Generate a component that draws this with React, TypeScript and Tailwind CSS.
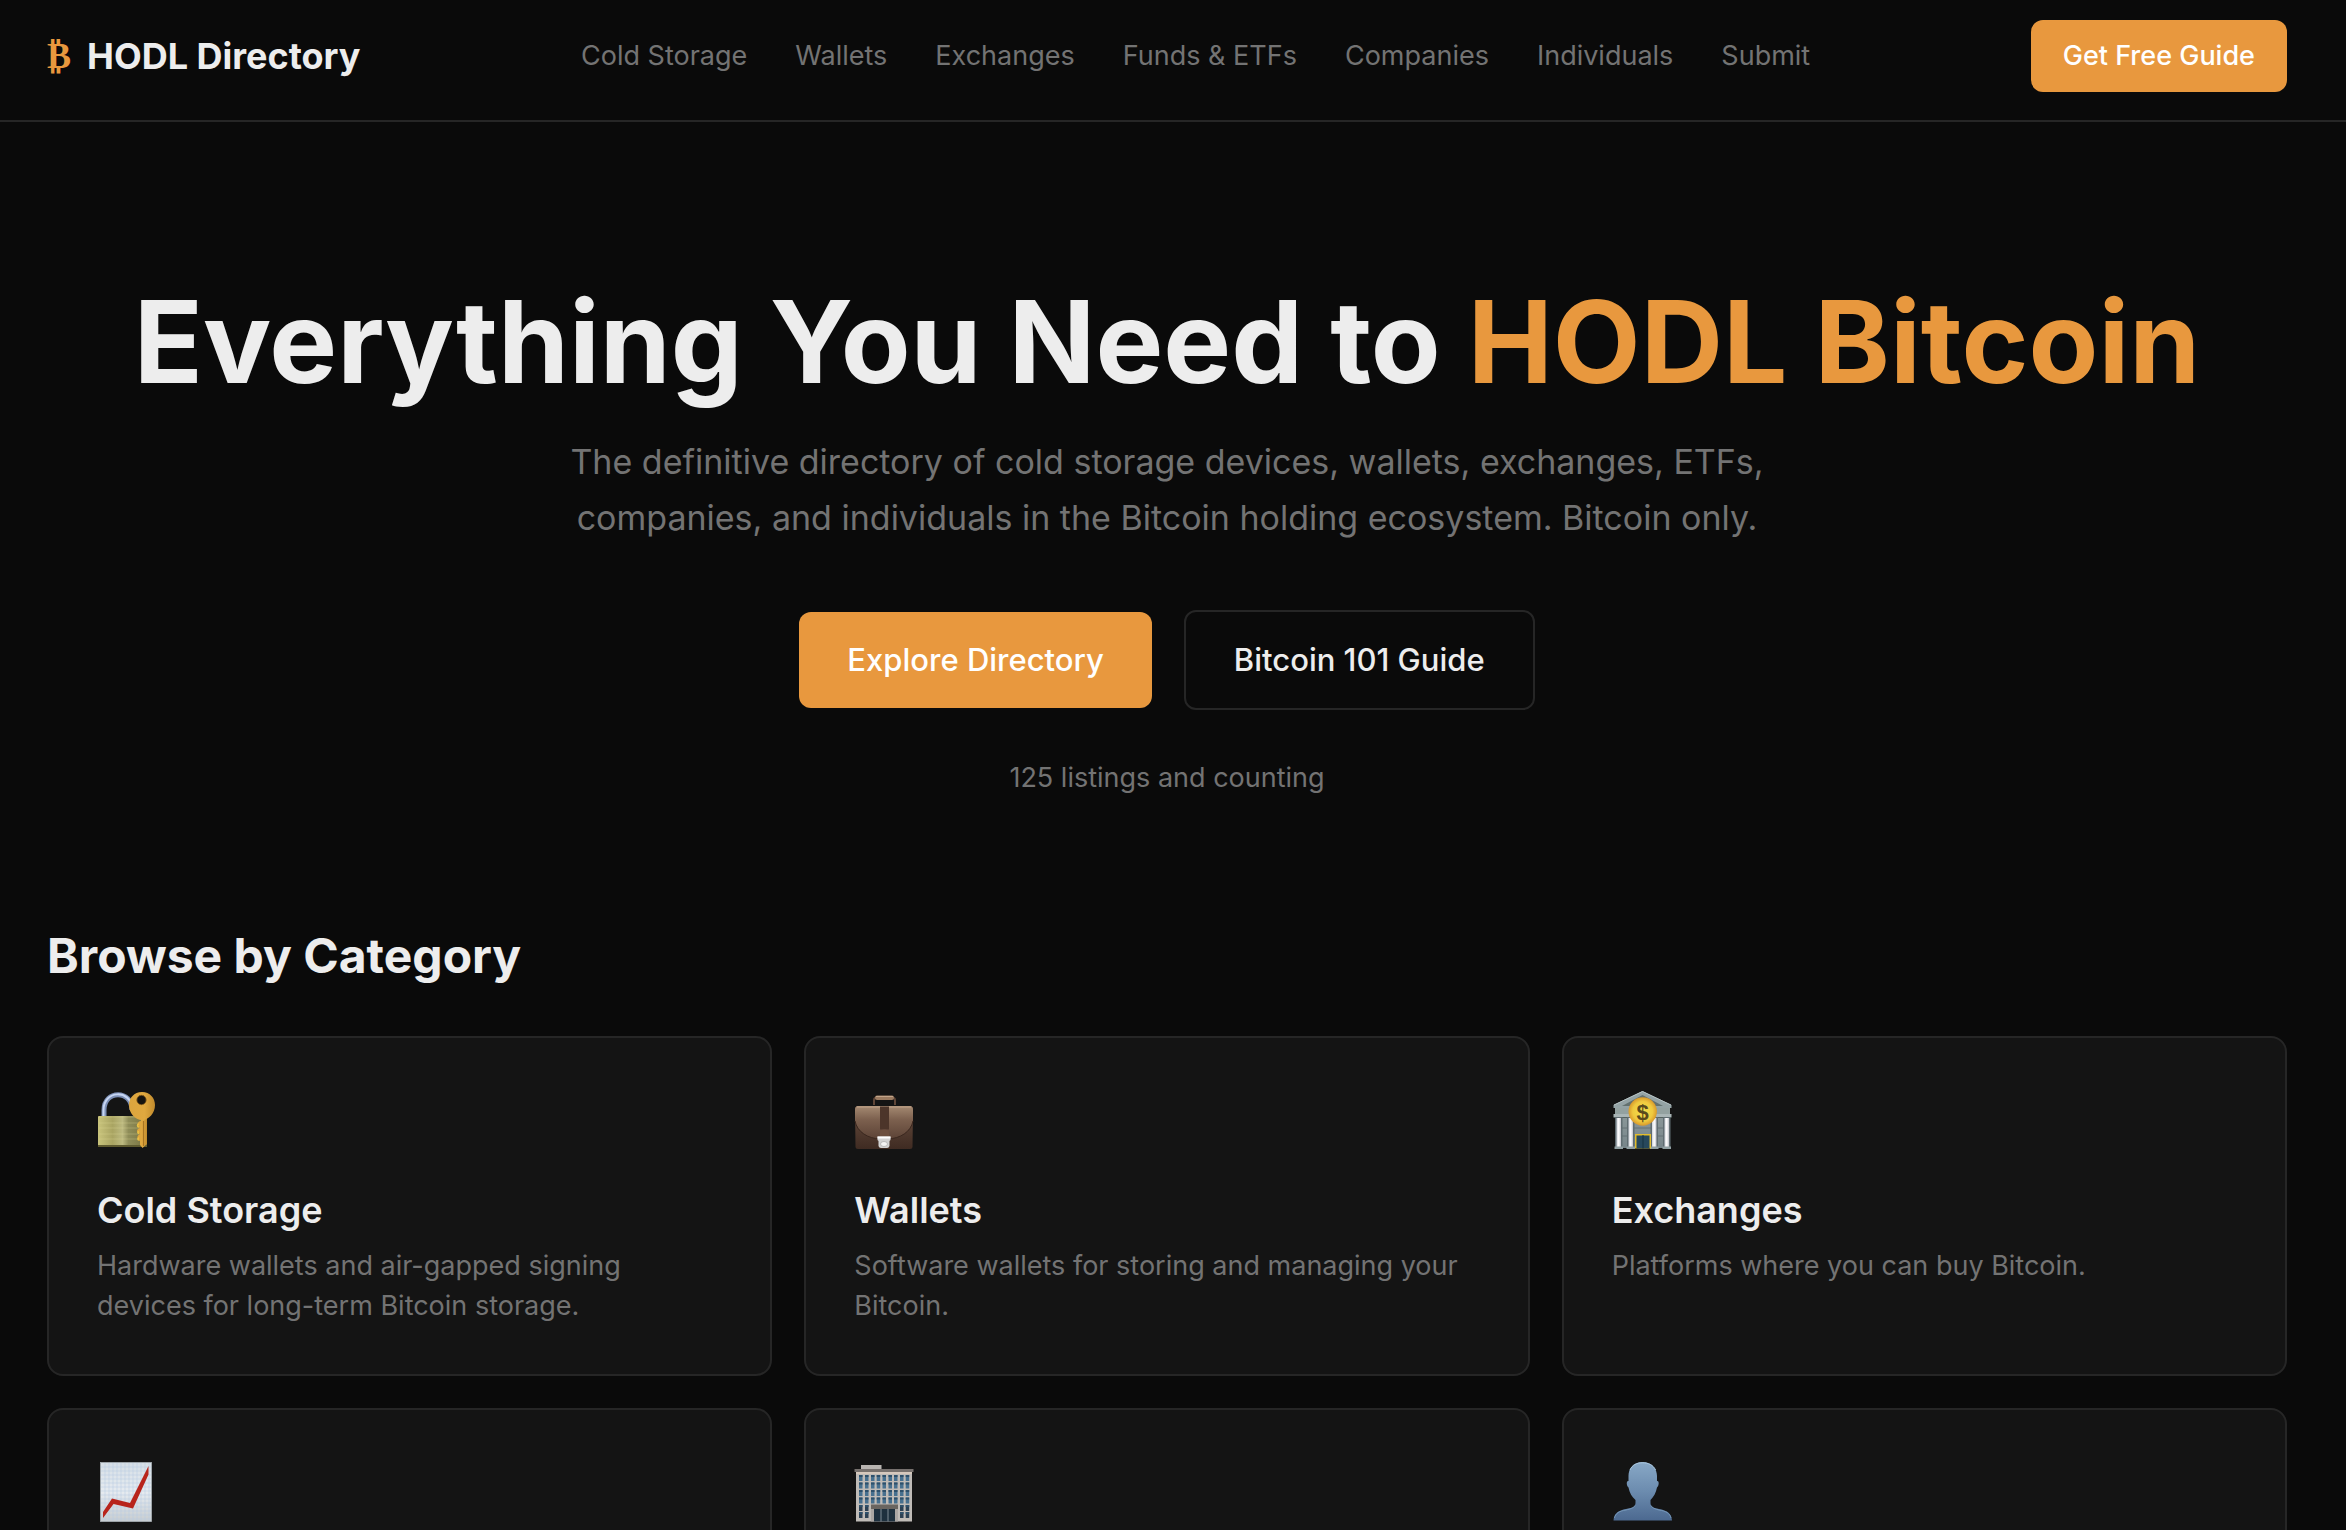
import React from 'react';

interface ICategory {
  title: string;
  description: string;
  href: string;
  Icon: React.FC;
}

const LockIcon: React.FC = () => (
  <svg viewBox="0 0 60 60" className="size-[60px]" aria-hidden="true">
    <defs>
      <linearGradient id="lockBody" x1="0" x2="1">
        <stop offset="0" stopColor="#c9c47c" />
        <stop offset="0.3" stopColor="#a9a462" />
        <stop offset="0.5" stopColor="#bcb980" />
        <stop offset="0.62" stopColor="#8f8d59" />
        <stop offset="1" stopColor="#76713f" />
      </linearGradient>
      <linearGradient id="lockKey" x1="0" x2="1">
        <stop offset="0" stopColor="#dca53e" />
        <stop offset="0.6" stopColor="#e0a83f" />
        <stop offset="1" stopColor="#c08a2c" />
      </linearGradient>
    </defs>
    <path d="M7 27V20C7 -0.5 35 -0.5 35 20" fill="none" stroke="#7c8fb5" strokeWidth="5" />
    <path d="M6.5 27V20C6.5 -0.5 34 -0.5 35 18" fill="none" stroke="#c6d5f2" strokeWidth="2" />
    <rect x="1" y="26" width="49" height="31" rx="1" fill="url(#lockBody)" />
    <path d="M1.5 27H43M2 33H42M2 38H42M2 44H42M2 49H42" stroke="#e3dd9c" strokeWidth="0.6" opacity="0.5" />
    <path d="M1 56H50" stroke="#5f5b30" strokeWidth="2" />
    <path d="M44 31C40 31 39 37 43 38C39 39 39 43 43 44C39 46 40 50 43 51V55L45.5 58L50 54V28H43Z" fill="url(#lockKey)" />
    <path d="M46.500 31V56" stroke="#a87522" strokeWidth="1.200" />
    <path d="M42 34C40 34 40 37 42 37M42 41.500C40.500 41.500 40.500 43.500 42 43.500M42 48C40.500 48 40.500 50 42 50" fill="none" stroke="#e8c145" strokeWidth="1.500" />
    <path fillRule="evenodd" d="M45 2C53 2 58 8 58 15C58 23 52 30 45 30C38 30 32 23 32 15C32 8 37 2 45 2ZM44.500 5.300A4.700 4.700 0 1 0 44.500 14.700A4.700 4.700 0 1 0 44.500 5.300Z" fill="url(#lockKey)" />
    <circle cx="44.500" cy="10" r="4.700" fill="#15130f" stroke="#98691f" strokeWidth="0.800" />
  </svg>
);

const BriefcaseIcon: React.FC = () => (
  <svg viewBox="0 0 60 60" className="size-[60px]" aria-hidden="true">
    <defs>
      <linearGradient id="caseBack" x1="0" y1="0" x2="0" y2="1">
        <stop offset="0" stopColor="#6b5041" />
        <stop offset="1" stopColor="#3f2b22" />
      </linearGradient>
      <linearGradient id="caseFlap" x1="0" y1="0" x2="0" y2="1">
        <stop offset="0" stopColor="#a58a72" />
        <stop offset="0.4" stopColor="#7d614f" />
        <stop offset="1" stopColor="#5c4336" />
      </linearGradient>
    </defs>
    <path d="M20 15V10Q20 7.500 23 7.500H38Q41 7.500 41 10V15" fill="none" stroke="#5f4638" strokeWidth="2" />
    <rect x="21" y="5.500" width="19" height="4.500" rx="2" fill="#9a7a60" />
    <path d="M22 6.500H39" stroke="#c3a58a" strokeWidth="1" />
    <path d="M1 20Q1 16 4 16H56Q59 16 59 20L58.500 57Q58.500 59 56 59H4Q1.500 59 1.500 57Z" fill="url(#caseBack)" />
    <path d="M1 20Q1 16 4 16H56Q59 16 59 20V30C57 42 46 48.500 34 49H26C14 48.500 3 42 1 30Z" fill="url(#caseFlap)" />
    <path d="M1 31C3 42 14 48.500 26 49H34C46 48.500 57 42 59 31" fill="none" stroke="#3a271e" strokeWidth="1" />
    <path d="M3 17H57" stroke="#c2a48a" strokeWidth="1" />
    <rect x="26" y="16.500" width="9" height="23" fill="#4c352a" />
    <path d="M26 43Q26 39.500 30.500 39.500Q35 39.500 35 43V47H26Z" fill="#6d5040" />
    <path d="M23.500 46.500H36.500V50L35.500 51V56Q35 58 33 58H27Q25 58 24.500 56V51L23.500 50Z" fill="#d3d3d3" />
    <path d="M23.500 47.500H36.500" stroke="#ffffff" strokeWidth="2" />
    <ellipse cx="30" cy="54" rx="3.500" ry="2.500" fill="#f4f4f4" stroke="#a8a8a8" strokeWidth="0.700" />
  </svg>
);

const BankIcon: React.FC = () => (
  <svg viewBox="0 0 60 60" className="size-[60px]" aria-hidden="true">
    <defs>
      <linearGradient id="bankWall" x1="0" y1="0" x2="0" y2="1">
        <stop offset="0" stopColor="#8a9799" />
        <stop offset="1" stopColor="#77858a" />
      </linearGradient>
      <radialGradient id="bankCoin">
        <stop offset="0" stopColor="#f3e14c" />
        <stop offset="0.7" stopColor="#efc93f" />
        <stop offset="1" stopColor="#d99a2b" />
      </radialGradient>
      <linearGradient id="bankColumn" x1="0" x2="1">
        <stop offset="0" stopColor="#cfd2da" />
        <stop offset="0.5" stopColor="#ffffff" />
        <stop offset="1" stopColor="#c0c2ca" />
      </linearGradient>
    </defs>
    <rect x="3" y="25" width="55" height="33" fill="url(#bankWall)" />
    <path d="M3 38H58M3 46H58" stroke="#5e6b70" strokeWidth="0.800" />
    <path d="M30.500 1L59.500 15V18H1.500V15Z" fill="#94a3a5" />
    <path d="M30.500 5L51 16H10Z" fill="#63716f" />
    <path d="M2 15L30.500 1.500L59 15" fill="none" stroke="#b7c4c5" strokeWidth="1" />
    <rect x="3" y="18" width="55" height="6" fill="#93a1a0" />
    <rect x="1.500" y="24" width="58" height="3" fill="#a9b5b6" />
    <path d="M1.500 27.500H59.500" stroke="#56625f" strokeWidth="1" />
    {[4.5, 16.5, 40, 52.5].map((x) => (
      <g key={x}>
        <rect x={x - 1.5} y="27" width="7.500" height="31" fill="#5f6c71" />
        <rect x={x} y="28" width="4.500" height="29" fill="url(#bankColumn)" />
        <rect x={x - 2} y="56.500" width="8.500" height="2.500" fill="#91a0a3" />
      </g>
    ))}
    <rect x="23" y="44" width="16" height="14.500" fill="#e3bd2b" />
    <rect x="24.500" y="45.500" width="13" height="13" fill="#27485c" />
    <path d="M31 45V58.500" stroke="#16303f" strokeWidth="1" />
    <circle cx="30.700" cy="21.500" r="14.200" fill="url(#bankCoin)" />
    <text x="30.700" y="29.500" textAnchor="middle" className="fill-[#59491c] font-['Liberation_Sans'] text-[22px] font-bold">$</text>
  </svg>
);

const ChartIcon: React.FC = () => (
  <svg viewBox="0 0 60 60" className="size-[60px]" aria-hidden="true">
    <defs>
      <linearGradient id="chartPaper" x1="0" y1="0" x2="0" y2="1">
        <stop offset="0" stopColor="#d6dfe6" />
        <stop offset="0.5" stopColor="#e6ebf0" />
        <stop offset="1" stopColor="#c8cdd0" />
      </linearGradient>
    </defs>
    <rect x="3.500" y="0.500" width="51" height="59" fill="url(#chartPaper)" stroke="#a9b0b5" strokeWidth="0.800" />
    <path d="M8 1V59M12 1V59M16 1V59M20 1V59M24 1V59M28 1V59M32 1V59M36 1V59M40 1V59M44 1V59M48 1V59M52 1V59M4 5H54M4 9H54M4 13H54M4 17H54M4 21H54M4 25H54M4 29H54M4 33H54M4 37H54M4 41H54M4 45H54M4 49H54M4 53H54M4 57H54" stroke="#b4cbe0" strokeWidth="0.500" />
    <path d="M6 56V50L15 36.500L33 41L51.500 4V12.500L36 46.500L16.500 42Z" fill="#b8241b" />
  </svg>
);

const BuildingIcon: React.FC = () => (
  <svg viewBox="0 0 60 60" className="size-[60px]" aria-hidden="true">
    <rect x="7" y="3" width="20.500" height="5" fill="#b9b5b1" />
    <rect x="2" y="10" width="56" height="49.500" fill="#bfbbb7" />
    <path d="M2 11H58" stroke="#d5c8bd" strokeWidth="2" />
    <rect x="0.500" y="7" width="59" height="3" fill="#77716e" />
    {[13, 20.5, 28, 35.5, 43, 50].map((y, row) => (
      <g key={y}>
        {[5, 11, 17, 22.7, 28.5, 34.5, 40, 46, 51.7].map((x) => (
          <g key={x}>
            <rect x={x} y={y} width="3.500" height="6" fill={row > 3 ? '#2c4154' : '#47708f'} />
            <rect x={x} y={y} width="3.500" height="2" fill="#2e506b" />
          </g>
        ))}
      </g>
    ))}
    <rect x="17" y="43" width="27" height="16.500" fill="#aaa6a3" />
    <rect x="20" y="47" width="21" height="12.500" fill="#1e303e" />
    <path d="M27 47V59.500M34 47V59.500" stroke="#7e8b94" strokeWidth="1" />
    <rect x="17" y="42.500" width="27" height="4.500" fill="#6a6560" />
  </svg>
);

const PersonIcon: React.FC = () => (
  <svg viewBox="0 0 60 60" className="size-[60px]" aria-hidden="true">
    <defs>
      <linearGradient id="personFill" x1="0" y1="0" x2="0" y2="1">
        <stop offset="0" stopColor="#88a8c6" />
        <stop offset="0.5" stopColor="#6c8caf" />
        <stop offset="1" stopColor="#4c6990" />
      </linearGradient>
    </defs>
    <path
      d="M30.500 0C40 0 45 7 45 14V19C47.500 18.500 47 24 45 25.500C44 31 41.500 35 38.500 38V41C38.500 45 42 46 47 47C55 48.500 59.500 51 60 58.500H1.500C2 51 6.500 48.500 14 47C19.500 46 23.500 45 23.500 41V38C20 35 17.500 31 16.500 25.500C14.500 24 14 18.500 16.500 19V14C16.500 7 21 0 30.500 0Z"
      fill="url(#personFill)"
    />
    <path d="M18 8C20 3 25 0.800 30.500 0.800C36 0.800 41.500 3 43.500 8" fill="none" stroke="#a9c6dd" strokeWidth="1" />
    <path d="M39 43.500C40 46 43 47 47 48C54 49 58 51.500 59 56M23 43.500C22 46 18 47 14 48C7 49 3.500 51.500 2.500 56" fill="none" stroke="#7e9fc0" strokeWidth="0.800" />
  </svg>
);

const navLinks = [
  { label: 'Cold Storage', href: '#cold-storage' },
  { label: 'Wallets', href: '#wallets' },
  { label: 'Exchanges', href: '#exchanges' },
  { label: 'Funds & ETFs', href: '#funds' },
  { label: 'Companies', href: '#companies' },
  { label: 'Individuals', href: '#individuals' },
  { label: 'Submit', href: '#submit' },
];

const categories: ICategory[] = [
  {
    title: 'Cold Storage',
    description: 'Hardware wallets and air-gapped signing devices for long-term Bitcoin storage.',
    href: '#cold-storage',
    Icon: LockIcon,
  },
  {
    title: 'Wallets',
    description: 'Software wallets for storing and managing your Bitcoin.',
    href: '#wallets',
    Icon: BriefcaseIcon,
  },
  { title: 'Exchanges', description: 'Platforms where you can buy Bitcoin.', href: '#exchanges', Icon: BankIcon },
  { title: '', description: '', href: '#funds', Icon: ChartIcon },
  { title: '', description: '', href: '#companies', Icon: BuildingIcon },
  { title: '', description: '', href: '#individuals', Icon: PersonIcon },
];

const Header: React.FC = () => (
  <header className="border-b-2 border-[#262626]">
    <div className="flex items-center justify-between pt-5 pr-[59px] pb-7 pl-[47px]">
      <a href="#home" className="flex items-center gap-4 text-[36px] leading-[56px] font-bold">
        <span className="font-['Liberation_Serif',serif] text-[#e8983e]">₿</span>
        HODL Directory
      </a>
      <nav className="flex items-center gap-12 text-[27px] leading-10 text-[#737373]">
        {navLinks.map((link) => (
          <a key={link.label} href={link.href}>
            {link.label}
          </a>
        ))}
      </nav>
      <button type="button" className="rounded-xl bg-[#e8983e] px-8 py-4 text-[27px] leading-10 font-medium text-white">
        Get Free Guide
      </button>
    </div>
  </header>
);

const Hero: React.FC = () => (
  <section className="flex flex-col items-center pt-40 pr-[59px] pb-[126px] pl-[47px] text-center">
    <h1 className="text-[114px] leading-[120px] font-bold">
      Everything You Need to <span className="text-[#e8983e]">HODL Bitcoin</span>
    </h1>
    <p className="mt-8 max-w-[1240px] text-[34px] leading-[56px] text-[#737373]">
      The definitive directory of cold storage devices, wallets, exchanges, ETFs, companies, and individuals in the
      Bitcoin holding ecosystem. Bitcoin only.
    </p>
    <div className="mt-16 flex items-center gap-8 text-[31px] leading-[48px] font-medium">
      <button type="button" className="rounded-xl bg-[#e8983e] px-12 py-6 text-white">
        Explore Directory
      </button>
      <button type="button" className="rounded-xl border-2 border-[#262626] px-12 py-6">
        Bitcoin 101 Guide
      </button>
    </div>
    <p className="mt-12 text-[27px] leading-10 text-[#737373]">125 listings and counting</p>
  </section>
);

const CategoryCard: React.FC<{ item: ICategory }> = ({ item: { title, description, href, Icon } }) => (
  <a href={href} className="block min-h-[340px] rounded-2xl border-2 border-[#262626] bg-[#141414] p-12">
    <div className="mb-6 h-[72px] pt-1">
      <Icon />
    </div>
    <h3 className="mb-2 text-[36px] leading-[56px] font-semibold">{title}</h3>
    <p className="text-[27px] leading-10 text-[#737373]">{description}</p>
  </a>
);

const App: React.FC = () => (
  <div className="h-screen overflow-hidden bg-[#0a0a0a] font-['Inter',sans-serif] text-[#ededed]">
    <Header />
    <main>
      <Hero />
      <section className="pr-[59px] pl-[47px]">
        <h2 className="mb-12 text-[48px] leading-[64px] font-bold">Browse by Category</h2>
        <div className="grid grid-cols-3 gap-8">
          {categories.map((item) => (
            <CategoryCard key={item.href} item={item} />
          ))}
        </div>
      </section>
    </main>
  </div>
);

export default App;
